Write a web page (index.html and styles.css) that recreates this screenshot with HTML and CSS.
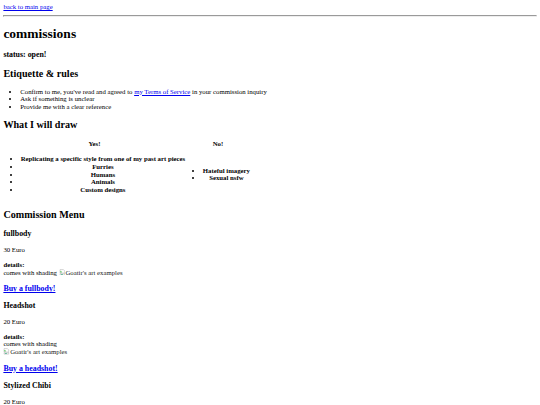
FILE: index.html
```html
<!DOCTYPE html>
<html>

<head>
    <meta charset="utf-8">
    <title>commissions</title>
    <link rel="stylesheet" href="styles.css">
</head>

<body>
    <a href="#">back to main page</a>
    <hr>

    <h1>commissions</h1>
    <h3>status: open!</h3>

    <h2>Etiquette &amp; rules</h2>
    <ul>
        <li>Confirm to me, you've read and agreed to <a href="#">my Terms of Service</a> in your commission inquiry</li>
        <li>Ask if something is unclear</li>
        <li>Provide me with a clear reference</li>
    </ul>

    <h2>What I will draw</h2>
    <table>
        <tr>
            <th>Yes!</th>
            <th>No!</th>
        </tr>
        <tr>
            <th>
                <ul>
                    <li>Replicating a specific style from one of my past art pieces</li>
                    <li>Furries</li>
                    <li>Humans</li>
                    <li>Animals</li>
                    <li>Custom designs</li>
                </ul>
            </th>
            <th>
                <ul>
                    <li>Hateful imagery</li>
                    <li>Sexual nsfw</li>
                </ul>
            </th>
        </tr>
    </table>

    <h2>Commission Menu</h2>

    <h3>fullbody</h3>
    <p>30 Euro</p>
    <p><b>details:</b><br>comes with shading <span class="art"><svg class="broken" viewBox="0 0 16 16"><path d="M2.5 1.5h8l3 3v4l-2 1.5-2-1.5-2 1.5-2-1.5-3 2z" fill="#fff" stroke="#999"/><path d="M3 5h3v3H3z" fill="#6c6"/><path d="M2.5 12l3-2 2 1.5 2-1.5 2 1.5 2-1.5v4.5h-11z" fill="#fff" stroke="#999"/><path d="M4 14l3-3 3 3z" fill="#4a8"/></svg>Goatir's art examples</span></p>
    <h3><a href="#">Buy a fullbody!</a></h3>

    <h3>Headshot</h3>
    <p>20 Euro</p>
    <p><b>details:</b><br>comes with shading<br><span class="art"><svg class="broken" viewBox="0 0 16 16"><path d="M2.5 1.5h8l3 3v4l-2 1.5-2-1.5-2 1.5-2-1.5-3 2z" fill="#fff" stroke="#999"/><path d="M3 5h3v3H3z" fill="#6c6"/><path d="M2.5 12l3-2 2 1.5 2-1.5 2 1.5 2-1.5v4.5h-11z" fill="#fff" stroke="#999"/><path d="M4 14l3-3 3 3z" fill="#4a8"/></svg>Goatir's art examples</span></p>
    <h3><a href="#">Buy a headshot!</a></h3>

    <h3>Stylized Chibi</h3>
    <p>20 Euro</p>
    <p><b>details:</b><br>comes with shading</p>
    <h3><a href="#">Buy a chibi!</a></h3>
</body>

</html>
```

FILE: styles.css
```css
html {
    zoom: 0.422;
}

body {
    font-family: 'Liberation Serif', serif;
    line-height: 1.15;
    color: #000;
}

.art {
    color: #222;
}

.broken {
    width: 16px;
    height: 16px;
    vertical-align: -2px;
}
```
